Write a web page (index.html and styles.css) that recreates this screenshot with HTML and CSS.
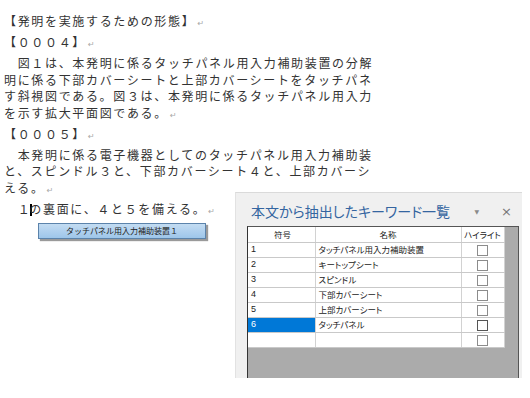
FILE: index.html
```html
<!DOCTYPE html>
<html lang="ja">
<head>
<meta charset="utf-8">
<link rel="stylesheet" href="styles.css">
</head>
<body>
<div class="doc">
  <p class="para">【発明を実施するための形態】<span class="ret">↵</span></p>
  <p class="para">【０００４】<span class="ret">↵</span></p>
  <p class="para">　図１は、本発明に係るタッチパネル用入力補助装置の分解<br>明に係る下部カバーシートと上部カバーシートをタッチパネ<br>す斜視図である。図３は、本発明に係るタッチパネル用入力<br>を示す拡大平面図である。<span class="ret">↵</span></p>
  <p class="para">【０００５】<span class="ret">↵</span></p>
  <p class="para">　本発明に係る電子機器としてのタッチパネル用入力補助装<br>と、スピンドル３と、下部カバーシート４と、上部カバーシ<br>える。<span class="ret">↵</span></p>
  <p class="para">　１<span class="caret"></span>の裏面に、４と５を備える。<span class="ret">↵</span></p>
  <div class="shape">タッチパネル用入力補助装置１</div>
</div>

<div class="pane">
  <div class="pane-head">
    <div class="pane-title">本文から抽出したキーワード一覧</div>
    <div class="pane-ctrls">
      <span class="ctrl-drop">▼</span>
      <span class="ctrl-close">×</span>
    </div>
  </div>
  <div class="grid">
    <table class="kw">
      <colgroup><col class="w1"><col class="w2"><col class="w3"></colgroup>
      <thead>
        <tr><th class="c1">符号</th><th class="c2">名称</th><th class="c3">ハイライト</th></tr>
      </thead>
      <tbody>
        <tr><td class="c1">1</td><td class="c2">タッチパネル用入力補助装置</td><td class="c3"><span class="chk"></span></td></tr>
        <tr><td class="c1">2</td><td class="c2">キートップシート</td><td class="c3"><span class="chk"></span></td></tr>
        <tr><td class="c1">3</td><td class="c2">スピンドル</td><td class="c3"><span class="chk"></span></td></tr>
        <tr><td class="c1">4</td><td class="c2">下部カバーシート</td><td class="c3"><span class="chk"></span></td></tr>
        <tr><td class="c1">5</td><td class="c2">上部カバーシート</td><td class="c3"><span class="chk"></span></td></tr>
        <tr><td class="c1 sel">6</td><td class="c2">タッチパネル</td><td class="c3"><span class="chk dark"></span></td></tr>
        <tr><td class="c1"></td><td class="c2"></td><td class="c3"><span class="chk"></span></td></tr>
      </tbody>
    </table>
  </div>
</div>
</body>
</html>
```

FILE: styles.css
```css
html, body {
  margin: 0;
  padding: 0;
  background: #ffffff;
}
body {
  width: 530px;
  height: 398px;
  overflow: hidden;
  position: relative;
}
.doc {
  padding: 13px 0 0 4px;
  font-family: "Noto Sans CJK JP", "Noto Sans", sans-serif;
  font-size: 12px;
  letter-spacing: 1.67px;
  color: #333;
}
.para {
  margin: 0 0 4.5px 0;
  line-height: 16.5px;
  white-space: nowrap;
}
.ret {
  font-family: "DejaVu Sans", sans-serif;
  font-size: 8px;
  line-height: 0;
  color: #a8a8a8;
  margin-left: 2px;
  letter-spacing: 0;
}
.caret {
  display: inline-block;
  width: 2px;
  height: 12px;
  background: #000;
  vertical-align: -2px;
  margin-left: -1px;
  margin-right: -3px;
}
.shape {
  margin: 6px 0 0 34px;
  width: 168px;
  height: 16px;
  box-sizing: border-box;
  border: 1px solid #5b83ab;
  background: linear-gradient(#c3dcf2, #9ec6ea);
  box-shadow: 2px 2px 1px #9a9a9a;
  font-size: 8px;
  letter-spacing: 0;
  line-height: 14px;
  text-align: center;
  color: #222;
}

/* Task pane */
.pane {
  position: absolute;
  left: 235px;
  top: 192px;
  width: 287px;
  height: 186px;
  box-sizing: border-box;
  background: #f0f0f0;
  border-top: 1px solid #dadada;
  border-left: 1px solid #e2e2e2;
  padding: 0 3px 0 11px;
  display: flex;
  flex-direction: column;
  font-family: "Noto Sans CJK JP", "Noto Sans", sans-serif;
}
.pane-head {
  height: 33px;
  display: flex;
  align-items: center;
  padding: 3px 0 0 4px;
  box-sizing: border-box;
}
.pane-title {
  font-size: 14px;
  color: #3465a0;
  font-feature-settings: "palt";
  letter-spacing: 0;
  white-space: nowrap;
}
.pane-ctrls {
  margin-left: auto;
  display: flex;
  align-items: center;
  gap: 22px;
  padding-right: 7px;
  color: #808080;
}
.ctrl-drop {
  font-family: "DejaVu Sans", sans-serif;
  font-size: 6px;
  color: #8a8a8a;
}
.ctrl-close {
  font-family: "DejaVu Sans", sans-serif;
  font-size: 13px;
  color: #777;
}
.grid {
  flex: 1;
  background: #ababab;
  border-top: 1px solid #555;
  border-left: 1px solid #333;
  border-right: 1px solid #555;
}
.kw {
  border-collapse: collapse;
  table-layout: fixed;
  width: 256px;
  background: #fff;
  font-size: 8.5px;
  font-feature-settings: "palt";
  color: #222;
}
.w1 { width: 67px; }
.w2 { width: 146px; }
.w3 { width: 43px; }
.kw th, .kw td {
  box-sizing: border-box;
  height: 15px;
  padding: 0;
  border-bottom: 1px solid #c9c9c9;
  border-right: 1px solid #d2d2d2;
  line-height: 11px;
  white-space: nowrap;
  overflow: hidden;
  font-weight: normal;
}
.kw th {
  text-align: center;
  height: 15px;
}
.kw th.c1 { text-align: left; padding-left: 26px; }
.kw td.c1 {
  padding-left: 3px;
  font-family: "Liberation Sans", sans-serif;
  font-size: 9px;
}
.kw td.c2 { padding-left: 3px; }
.c3 { text-align: center; }
.kw td.sel {
  background: #0078d7;
  color: #fff;
}
.chk {
  display: inline-block;
  width: 9px;
  height: 9px;
  border: 1px solid #8c8c8c;
  background: #fff;
  vertical-align: middle;
}
.chk.dark { border-color: #555; }
```
